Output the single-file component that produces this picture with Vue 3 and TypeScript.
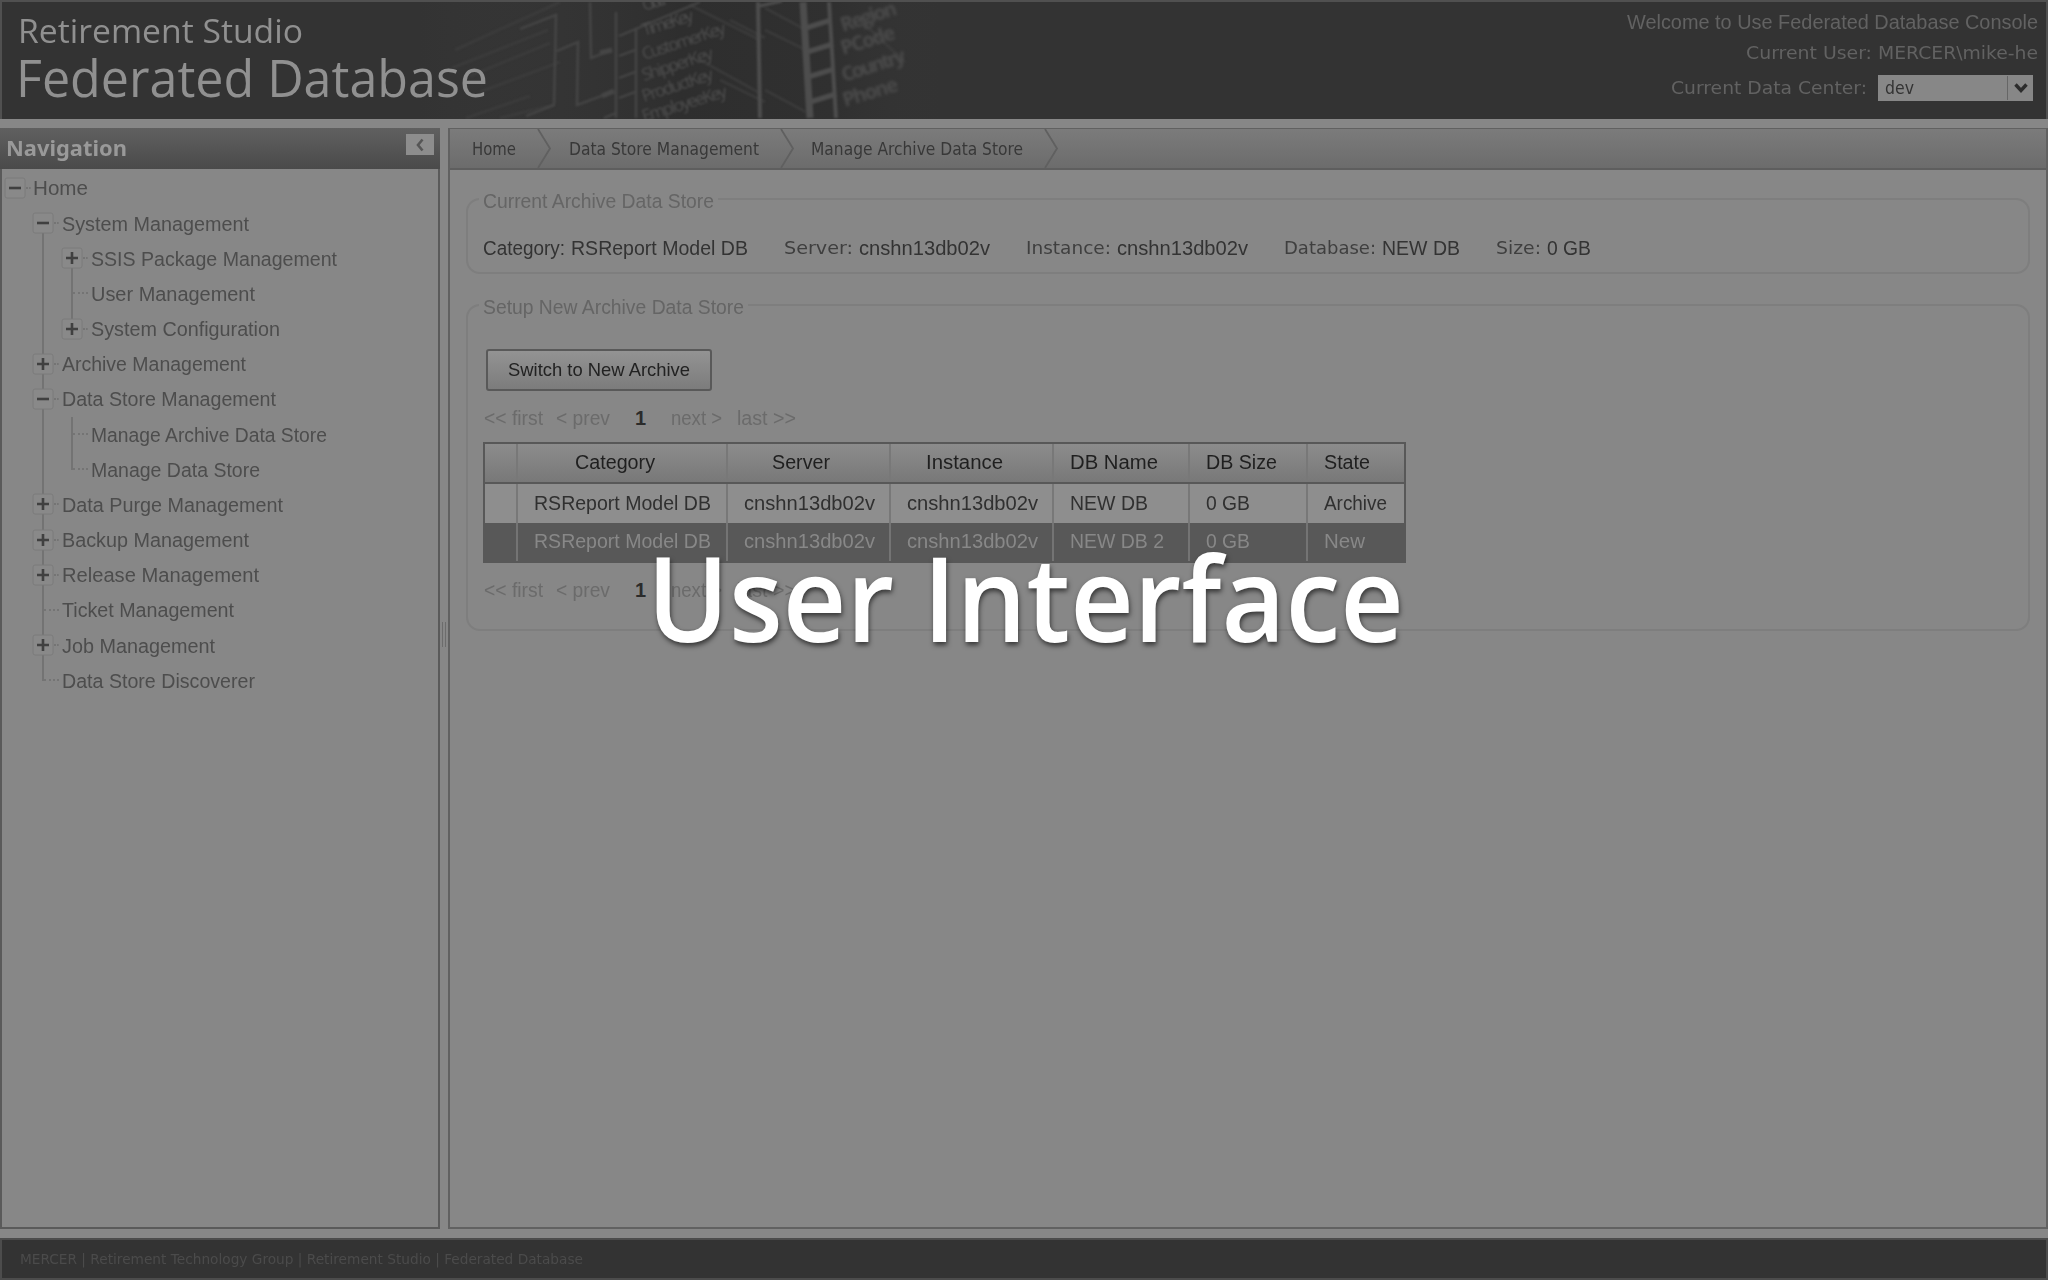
<script setup lang="ts">
import type { Directive } from 'vue'

// Stretches a label horizontally so that it takes exactly the given width.
const vFit: Directive<HTMLElement, number> = {
  mounted(el, binding) {
    el.style.display = 'inline-block'
    el.style.whiteSpace = 'nowrap'
    const natural = el.getBoundingClientRect().width
    el.style.transformOrigin = '0 50%'
    el.style.transform = `scaleX(${binding.value / natural})`
    el.style.width = `${binding.value}px`
  },
}

interface TreeNode {
  label: string
  level: number
  width: number
  toggle?: 'plus' | 'minus'
  lines?: string[]
}

const tree: TreeNode[] = [
  { label: 'Home', level: 0, width: 55, toggle: 'minus' },
  { label: 'System Management', level: 1, width: 187, toggle: 'minus', lines: ['b1'] },
  { label: 'SSIS Package Management', level: 2, width: 246, toggle: 'plus', lines: ['f1', 'b2'] },
  { label: 'User Management', level: 2, width: 164, lines: ['f1', 'f2'] },
  { label: 'System Configuration', level: 2, width: 189, toggle: 'plus', lines: ['f1', 't2'] },
  { label: 'Archive Management', level: 1, width: 184, toggle: 'plus', lines: ['f1'] },
  { label: 'Data Store Management', level: 1, width: 214, toggle: 'minus', lines: ['f1'] },
  { label: 'Manage Archive Data Store', level: 2, width: 236, lines: ['f1', 'f2'] },
  { label: 'Manage Data Store', level: 2, width: 169, lines: ['f1', 't2'] },
  { label: 'Data Purge Management', level: 1, width: 221, toggle: 'plus', lines: ['f1'] },
  { label: 'Backup Management', level: 1, width: 187, toggle: 'plus', lines: ['f1'] },
  { label: 'Release Management', level: 1, width: 197, toggle: 'plus', lines: ['f1'] },
  { label: 'Ticket Management', level: 1, width: 172, lines: ['f1'] },
  { label: 'Job Management', level: 1, width: 153, toggle: 'plus', lines: ['f1'] },
  { label: 'Data Store Discoverer', level: 1, width: 193, lines: ['t1'] },
]

const crumbs = [
  { label: 'Home', width: 44 },
  { label: 'Data Store Management', width: 190 },
  { label: 'Manage Archive Data Store', width: 212 },
]

const info = [
  { label: 'Category:', lw: 82, value: 'RSReport Model DB', vw: 177, arial: true },
  { label: 'Server:', lw: 69, value: 'cnshn13db02v', vw: 131 },
  { label: 'Instance:', lw: 85, value: 'cnshn13db02v', vw: 131 },
  { label: 'Database:', lw: 92, value: 'NEW DB', vw: 78 },
  { label: 'Size:', lw: 45, value: '0 GB', vw: 44 },
]

const columns = [
  { label: 'Category', width: 80, cls: 'c1' },
  { label: 'Server', width: 58, cls: 'c2' },
  { label: 'Instance', width: 77, cls: 'c3' },
  { label: 'DB Name', width: 88, cls: 'c4' },
  { label: 'DB Size', width: 71, cls: 'c5' },
  { label: 'State', width: 46, cls: 'c6' },
]

const rows = [
  [['RSReport Model DB', 177], ['cnshn13db02v', 131], ['cnshn13db02v', 131], ['NEW DB', 78], ['0 GB', 44], ['Archive', 63]],
  [['RSReport Model DB', 177], ['cnshn13db02v', 131], ['cnshn13db02v', 131], ['NEW DB 2', 94], ['0 GB', 44], ['New', 41]],
] as [string, number][][]
</script>

<template>
  <div class="page">
    <header class="banner">
      <svg class="art" width="520" height="117" viewBox="420 2 520 117">
        <defs>
          <linearGradient id="fade" x1="0" x2="1" y1="0" y2="0">
            <stop offset="0" stop-color="#3d3d3d" stop-opacity="0" />
            <stop offset="0.5" stop-color="#2e2e2e" />
            <stop offset="0.8" stop-color="#303030" />
            <stop offset="1" stop-color="#363636" stop-opacity="0" />
          </linearGradient>
        </defs>
        <rect x="420" y="2" width="520" height="117" fill="url(#fade)" />
        <g class="soft" fill="none" stroke="#3c3c3c" stroke-width="2.5">
          <path d="M455 50 560 2M452 68 548 30M470 76 550 43M480 92 560 62M466 118 530 96M500 118 554 105" />
          <path d="M690 5 760 40M730 20 765 38M700 60 758 92M720 80 765 102M765 8 806 30M765 30 806 50M765 90 806 112M860 20 905 62" />
        </g>
        <g class="soft" fill="none" stroke="#464646" stroke-width="2.4">
          <path d="M520 29 556 15 554 105 526 116M557 51 578 42 577 105 612 92M590 2 591 58 612 50M616 12V118M636 28V118" />
          <path d="M619 36 700 2M619 56 635 50M619 78 635 72M619 98 635 92M604 118 616 113" />
          <path d="M600 53 612 50M602 96 614 91" stroke-width="5" />
        </g>
        <g class="soft" fill="none" stroke="#4d4d4d">
          <path d="M758 2 760 118" stroke-width="4" />
          <path d="M803 2 810 118" stroke-width="7" />
          <path d="M829 2 836 118" stroke-width="4" />
          <path d="M806 28 831 20M807 52 833 44M808 77 834 69M810 102 836 94" stroke-width="5" />
          <path d="M760 6 782 1" stroke-width="3" />
        </g>
        <g class="soft art-text" fill="#4e4e4e">
          <text transform="translate(644 11) rotate(-17)" textLength="26">Order</text>
          <text transform="translate(644 36) rotate(-17)" textLength="53">TimeKey</text>
          <text transform="translate(644 60) rotate(-18)" textLength="87">CustomerKey</text>
          <text transform="translate(644 81) rotate(-18)" textLength="74">ShipperKey</text>
          <text transform="translate(644 102) rotate(-18)" textLength="74">ProductKey</text>
          <text transform="translate(644 122) rotate(-17)" textLength="88">EmployeeKey</text>
        </g>
        <g class="softer art-text big" fill="#4a4a4a">
          <text transform="translate(843 32) rotate(-18)" textLength="58">Region</text>
          <text transform="translate(843 55) rotate(-17)" textLength="56">PCode</text>
          <text transform="translate(844 82) rotate(-18)" textLength="66">Country</text>
          <text transform="translate(845 107) rotate(-17)" textLength="57">Phone</text>
        </g>
      </svg>
      <div class="titles">
        <div class="title-small"><span v-fit="285">Retirement Studio</span></div>
        <div class="title-large"><span v-fit="472">Federated Database</span></div>
      </div>
      <div class="account">
        <div class="line l1"><span v-fit="411">Welcome to Use Federated Database Console</span></div>
        <div class="line l2"><span v-fit="126">Current User:</span><span v-fit="160">MERCER\mike-he</span></div>
        <div class="line l3">
          <span v-fit="196">Current Data Center:</span>
          <div class="select">
            <span v-fit="29">dev</span>
            <div class="drop">
              <svg width="16" height="12" viewBox="0 0 16 12"><path d="M2.500 2.500 8 8.500 13.500 2.500" fill="none" stroke="#2c2c2c" stroke-width="3.4" /></svg>
            </div>
          </div>
        </div>
      </div>
    </header>

    <main class="body">
      <nav class="nav">
        <div class="nav-head">
          <span v-fit="121">Navigation</span>
          <div class="collapse">
            <svg width="10" height="14" viewBox="0 0 10 14"><path d="M7.500 1.500 3 7 7.500 12.500" fill="none" stroke="#565656" stroke-width="2.6" /></svg>
          </div>
        </div>
        <ul class="tree">
          <li v-for="node in tree" :key="node.label" :class="'lv' + node.level">
            <i v-for="line in node.lines" :key="line" class="guide" :class="line"></i>
            <div class="joint">
              <svg v-if="node.toggle" width="22" height="22" viewBox="0 0 22 22">
                <rect x="1" y="1" width="20" height="20" rx="2" fill="#898989" stroke="#7b7b7b" />
                <path :d="node.toggle === 'plus' ? 'M5 11H17M11 5V17' : 'M5 11H17'" stroke="#404040" stroke-width="2.6" />
              </svg>
              <i class="dots" :class="{ wide: !node.toggle }"></i>
            </div>
            <span v-fit="node.width">{{ node.label }}</span>
          </li>
        </ul>
      </nav>

      <div class="splitter"><i></i></div>

      <section class="content">
        <div class="crumbs">
          <template v-for="crumb in crumbs" :key="crumb.label">
            <span v-fit="crumb.width">{{ crumb.label }}</span>
            <svg width="16" height="39" viewBox="0 0 16 39"><path d="M2 0 14 19.500 2 39" fill="none" stroke="#606060" stroke-width="1.8" /></svg>
          </template>
        </div>

        <div class="box box-a">
          <div class="legend"><span v-fit="231">Current Archive Data Store</span></div>
          <div class="info">
            <div v-for="item in info" :key="item.label" class="pair">
              <span v-fit="item.lw" :class="item.arial ? 'val' : 'key'">{{ item.label }}</span>
              <span v-fit="item.vw" class="val">{{ item.value }}</span>
            </div>
          </div>
        </div>

        <div class="box box-b">
          <div class="legend"><span v-fit="261">Setup New Archive Data Store</span></div>
          <button class="switch" type="button"><span v-fit="182">Switch to New Archive</span></button>
          <div class="pager">
            <span v-fit="59">&lt;&lt; first</span><span v-fit="54">&lt; prev</span><b>1</b><span v-fit="51">next &gt;</span><span v-fit="59">last &gt;&gt;</span>
          </div>
          <div class="table">
            <div class="tr head">
              <div class="c0"></div>
              <div v-for="col in columns" :key="col.label" :class="col.cls"><span v-fit="col.width">{{ col.label }}</span></div>
            </div>
            <div v-for="(row, r) in rows" :key="r" class="tr" :class="{ selected: r === 1 }">
              <div class="c0"></div>
              <div v-for="(cell, c) in row" :key="c" :class="'c' + (c + 1)"><span v-fit="cell[1]">{{ cell[0] }}</span></div>
            </div>
          </div>
          <div class="pager second">
            <span v-fit="59">&lt;&lt; first</span><span v-fit="54">&lt; prev</span><b>1</b><span v-fit="51">next &gt;</span><span v-fit="59">last &gt;&gt;</span>
          </div>
        </div>
      </section>
    </main>

    <footer class="foot"><span v-fit="563">MERCER | Retirement Technology Group | Retirement Studio | Federated Database</span></footer>

    <div class="caption"><span v-fit="757">User Interface</span></div>
  </div>
</template>

<style>
body {
  margin: 0;
  background: #878787;
}
</style>

<style scoped>
.page {
  position: relative;
  display: flex;
  flex-direction: column;
  width: 2048px;
  height: 1280px;
  box-sizing: border-box;
  overflow: hidden;
  background: #878787;
  font-family: "Liberation Sans", Arial, sans-serif;
  font-size: 20px;
  color: #4d4d4d;
}
.banner {
  position: relative;
  display: flex;
  justify-content: space-between;
  height: 119px;
  box-sizing: border-box;
  border: 2px solid #505050;
  border-bottom: 0;
  background: #333;
}
.art {
  position: absolute;
  left: 418px;
  top: 0;
}
.soft { filter: blur(0.8px); }
.softer { filter: blur(1.4px); }
.art-text { font: 17px "Open Sans", sans-serif; }
.art-text.big { font-size: 20px; font-weight: 700; }
.titles {
  position: relative;
  padding-left: 16px;
  font-family: "Open Sans", "Noto Sans", sans-serif;
  color: #909090;
}
.title-small {
  height: 50px;
  font-size: 33px;
  line-height: 58px;
}
.title-large {
  height: 60px;
  margin-left: -2px;
  font-size: 51px;
  line-height: 50px;
}
.account {
  display: flex;
  flex-direction: column;
  padding-right: 8px;
  color: #626262;
}
.line {
  display: flex;
  justify-content: flex-end;
  align-items: center;
}
.l1 { height: 40px; }
.l2 { height: 22px; gap: 6px; font: 17.5px "DejaVu Sans", sans-serif; }
.l3 {
  height: 48px;
  gap: 11px;
  padding-right: 5px;
  font: 17.5px "DejaVu Sans", sans-serif;
}
.select {
  display: flex;
  justify-content: space-between;
  align-items: center;
  width: 155px;
  height: 26px;
  box-sizing: border-box;
  padding-left: 7px;
  background: #878787;
  color: #333;
  font: 17px "DejaVu Sans", sans-serif;
}
.drop {
  display: flex;
  align-items: center;
  justify-content: center;
  width: 25px;
  height: 24px;
  border-left: 1px solid #666;
}
.body {
  display: flex;
  height: 1101px;
  margin-top: 9px;
}
.nav {
  width: 440px;
  box-sizing: border-box;
  border: 2px solid #5a5a5a;
  border-width: 0 2px 2px;
}
.nav-head {
  display: flex;
  justify-content: space-between;
  height: 41px;
  margin: 0 -2px;
  padding: 0 6px;
  background: linear-gradient(#606060, #4a4a4a);
  color: #999;
  font: 700 21px/41px "Noto Sans", sans-serif;
}
.collapse {
  display: flex;
  align-items: center;
  justify-content: center;
  width: 28px;
  height: 21px;
  margin-top: 6px;
  background: #8d8d8d;
}
.tree {
  margin: 0;
  padding: 2.400px 0 0;
  list-style: none;
}
.tree li {
  position: relative;
  display: flex;
  align-items: center;
  height: 35.17px;
}
.lv1 { padding-left: 28.5px; }
.lv2 { padding-left: 57.5px; }
.joint {
  position: relative;
  display: flex;
  align-items: center;
  width: 31.400px;
  margin-top: -2px;
}
.joint svg { margin-left: 1.500px; flex: none; }
.dots {
  width: 5px;
  border-top: 2px dotted #747474;
}
.dots.wide { width: 15px; margin-left: 13px; }
.guide {
  position: absolute;
  width: 2px;
  background: #737373;
}
.b1, .f1, .t1 { left: 40px; }
.b2, .f2, .t2 { left: 69px; }
.b1, .b2 { top: 50%; bottom: 0; }
.f1, .f2 { top: 0; bottom: 0; }
.t1, .t2 { top: 0; bottom: 50%; }
.splitter {
  display: flex;
  justify-content: center;
  width: 8px;
}
.splitter i {
  width: 2px;
  height: 25px;
  margin-top: 494px;
  border: 1px solid #6c6c6c;
  border-width: 0 1px;
}
.content {
  flex: 1;
  box-sizing: border-box;
  border: 2px solid #616161;
  border-top-width: 1px;
}
.crumbs {
  display: flex;
  align-items: center;
  gap: 17.5px;
  height: 39px;
  padding-left: 22px;
  border-bottom: 2px solid #5e5e5e;
  background: linear-gradient(#7b7b7b, #6c6c6c);
  color: #383838;
  font: 18px "DejaVu Sans Condensed", "DejaVu Sans", sans-serif;
}
.crumbs svg { margin-left: 2.500px; margin-right: -1px; }
.box {
  box-sizing: border-box;
  margin: 0 16px;
  border: 2px solid #7e7e7e;
  border-radius: 14px;
}
.box-a { height: 76px; margin-top: 28px; }
.box-b { height: 327px; margin-top: 30px; }
.legend {
  width: fit-content;
  height: 24px;
  margin: -12px 0 0 11px;
  padding: 0 4px;
  background: #878787;
  color: #656565;
  line-height: 27px;
}
.info {
  display: flex;
  gap: 36px;
  height: 50px;
  padding-left: 15px;
  align-items: center;
  margin-top: 11px;
  color: #333;
}
.pair {
  display: flex;
  align-items: center;
  gap: 6px;
}
.key {
  font: 17px "DejaVu Sans", sans-serif;
  color: #3f3f3f;
}
.switch {
  display: block;
  width: 226px;
  height: 42px;
  margin: 31px 0 0 18px;
  padding: 0;
  border: 2px solid #595959;
  border-radius: 3px;
  background: linear-gradient(#939393, #7c7c7c);
  color: #222;
  font: 18.500px "Liberation Sans", Arial, sans-serif;
}
.pager {
  display: flex;
  align-items: center;
  height: 48px;
  padding: 3px 0 0 16px;
  color: #6b6b6b;
}
.pager.second { padding-top: 3px; }
.pager span:nth-child(2) { margin-left: 13px; }
.pager b {
  width: 11px;
  margin: 0 25px 0 25px;
  color: #2b2b2b;
}
.pager span:last-child { margin-left: 15px; }
.table {
  width: 923px;
  box-sizing: border-box;
  margin-left: 15px;
  border: 2px solid #585858;
  color: #303030;
}
.tr {
  display: flex;
  height: 39px;
  box-sizing: border-box;
  background: #8e8e8e;
}
.tr.head {
  height: 40px;
  padding-bottom: 0;
  border-bottom: 2px solid #585858;
  background: linear-gradient(#8c8c8c, #787878);
  color: #1f1f1f;
}
.tr > div {
  display: flex;
  align-items: center;
  box-sizing: border-box;
  padding-left: 16px;
  padding-bottom: 1px;
  border-right: 2px solid #787878;
}
.tr.selected { height: 38px; background: #585858; color: #888; }
.tr.selected > div { border-color: #747474; }
.c0 { width: 33px; }
.c1 { width: 210px; }
.c2 { width: 163px; }
.c3 { width: 163px; }
.c4 { width: 136px; }
.c5 { width: 118px; }
.c6 { flex: 1; border-right: 0 !important; }
.tr.head > .c1, .tr.head > .c2, .tr.head > .c3 {
  justify-content: center;
  padding: 0 15px 1px 0;
}
.foot {
  display: flex;
  align-items: center;
  height: 42px;
  box-sizing: border-box;
  margin-top: 9px;
  padding-left: 18px;
  border: 2px solid #4c4c4c;
  background: #333;
  color: #4b4b4b;
  font: 14px "DejaVu Sans", sans-serif;
}
.caption {
  position: absolute;
  left: 647px;
  top: 517px;
  color: #fff;
  font: 600 117px/160px "Open Sans", "Noto Sans", sans-serif;
  text-shadow: 1px 3px 5px rgba(0, 0, 0, 0.6);
}
</style>
